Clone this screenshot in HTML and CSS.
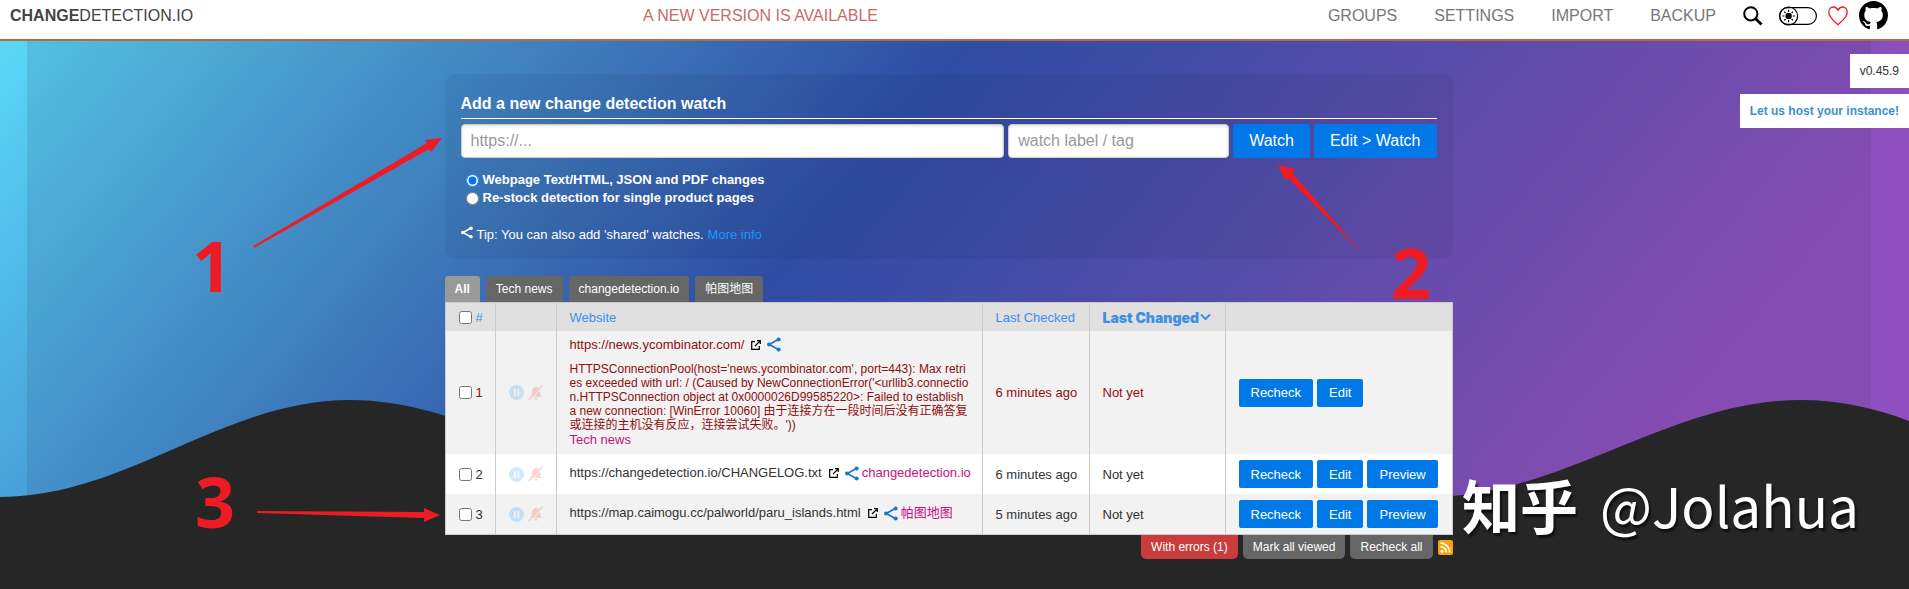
FILE: index.html
```html
<!DOCTYPE html>
<html lang="en">
<head>
    <meta charset="UTF-8">
    <meta name="viewport" content="width=device-width, initial-scale=1.0">
    <title>Change Detection</title>
    <link rel="stylesheet" href="styles.css">
</head>
<body>
    <svg class="symbols" aria-hidden="true">
        <symbol id="icon-share" viewBox="0 0 24 24">
            <path d="M20 3 4 12l16 9" fill="none" stroke="currentColor" stroke-width="3"/>
            <circle cx="20" cy="3.5" r="3.5"/><circle cx="3.5" cy="12" r="3.5"/><circle cx="20" cy="20.5" r="3.5"/>
        </symbol>
        <symbol id="icon-external" viewBox="0 0 10 10">
            <path d="M4 1.7H.7v7.6h7.6V6M6 .7h3.3V4M9.2.8 4 6" fill="none" stroke="currentColor" stroke-width="1.2"/>
        </symbol>
        <symbol id="icon-pause" viewBox="0 0 15 15">
            <circle cx="7.5" cy="7.5" r="7.5"/>
            <path d="M5.7 4v7M9.3 4v7" stroke="#fff" stroke-width="1.6"/>
        </symbol>
        <symbol id="icon-bell-off" viewBox="0 0 16 16">
            <path d="M2 12c2-1.500 2-3.200 2-5.500 0-2.500 1.500-4 3.200-4.300a1 1 0 0 1 1.900 0C11 2.600 12 4.200 12 6.500c0 2.300.2 4 2 5.500zM6.300 13h3.600a1.800 1.800 0 0 1-3.600 0z"/>
            <path d="M1.800 15.800 15.300 1.200" stroke="#fff" stroke-width="1"/>
            <path d="M.8 15 14.500.5" stroke="currentColor" stroke-width="1.600"/>
        </symbol>
    </svg>

    <header class="header">
        <a class="brand" href="#"><strong>CHANGE</strong>DETECTION.IO</a>
        <a class="new-version" href="#">A NEW VERSION IS AVAILABLE</a>
        <nav class="menu">
            <a href="#">GROUPS</a>
            <a href="#">SETTINGS</a>
            <a href="#">IMPORT</a>
            <a href="#">BACKUP</a>
            <div class="menu-icons">
                <button class="icon-button search" aria-label="Search">
                    <svg width="20" height="20" viewBox="0 0 20 20"><circle cx="7.800" cy="7.800" r="6.600" fill="none" stroke="#000" stroke-width="2"/><path d="m12.700 12.700 5.800 5.800" stroke="#000" stroke-width="2.800"/></svg>
                </button>
                <button class="icon-button toggle" aria-label="Toggle dark mode">
                    <svg width="38" height="20" viewBox="0 0 38 20">
                        <g fill="none" stroke="#000" stroke-width="1.200"><rect x=".6" y="1.600" width="36.800" height="16.800" rx="8.400"/><circle cx="9.600" cy="10" r="9"/>
                        <path d="M9.600 3.800v2M9.600 14.200v2M3.400 10h2M13.800 10h2M5.200 5.600l1.400 1.400M12.600 13l1.400 1.400M14 5.600 12.600 7M6.600 13l-1.400 1.400"/></g>
                        <circle cx="9.600" cy="10" r="3.200"/>
                    </svg>
                </button>
                <a href="#" aria-label="Support"><svg width="20" height="20" viewBox="0 0 20 20"><path d="M10 18.800C6.500 15.500.8 11.500.8 6.300.8 3.300 2.800 1 5.400 1 7.400 1 9 2.200 10 4.200 11 2.200 12.600 1 14.600 1c2.600 0 4.600 2.300 4.600 5.300 0 5.200-5.700 9.200-9.200 12.500z" fill="none" stroke="#ed1c24" stroke-width="1.300"/></svg></a>
                <a href="#" aria-label="GitHub"><svg width="29" height="29" viewBox="0 0 16 16"><path d="M8 0C3.580 0 0 3.580 0 8c0 3.540 2.290 6.530 5.470 7.590.4.070.55-.17.55-.38 0-.19-.01-.82-.01-1.490-2.010.37-2.530-.49-2.690-.94-.09-.23-.48-.94-.82-1.130-.28-.15-.68-.52-.01-.53.63-.01 1.080.58 1.230.82.72 1.210 1.870.87 2.330.66.07-.52.28-.87.51-1.070-1.780-.2-3.640-.89-3.640-3.950 0-.87.31-1.590.82-2.150-.08-.2-.36-1.020.08-2.120 0 0 .67-.21 2.200.82.64-.18 1.320-.27 2-.27s1.360.09 2 .27c1.530-1.040 2.200-.82 2.200-.82.44 1.100.16 1.920.08 2.120.51.56.82 1.270.82 2.150 0 3.070-1.870 3.750-3.650 3.950.29.25.54.73.54 1.480 0 1.070-.01 1.930-.01 2.200 0 .21.15.46.55.38A8.010 8.010 0 0 0 16 8c0-4.420-3.580-8-8-8z"/></svg></a>
            </div>
        </nav>
    </header>

    <div class="backdrop">
        <div class="backdrop-shade"></div>
        <svg class="hill" viewBox="0 0 1909 189" preserveAspectRatio="none"><path d="M0 97C127 97 223 0 350 0c130 0 230 97 365 97h715C1562 97 1670 0 1800 0c40 0 75 8 109 21v168H0z"/></svg>
    </div>

    <aside class="notices">
        <span class="notice">v0.45.9</span>
        <a class="notice hosting" href="#">Let us host your instance!</a>
    </aside>

    <main class="content">
        <form class="new-watch">
            <h1>Add a new change detection watch</h1>
            <div class="fields">
                <input class="url" type="text" placeholder="https://..." aria-label="URL">
                <input class="tag-field" type="text" placeholder="watch label / tag" aria-label="Watch label or tag">
                <button type="button">Watch</button>
                <button type="button">Edit &gt; Watch</button>
            </div>
            <div class="processors">
                <label><input type="radio" name="processor" checked> Webpage Text/HTML, JSON and PDF changes</label>
                <label><input type="radio" name="processor"> Re-stock detection for single product pages</label>
            </div>
            <p class="tip"><svg class="tip-icon"><use href="#icon-share"/></svg> Tip: You can also add 'shared' watches. <a href="#">More info</a></p>
        </form>

        <nav class="tabs">
            <a class="active" href="#">All</a>
            <a href="#">Tech news</a>
            <a href="#">changedetection.io</a>
            <a href="#">帕图地图</a>
        </nav>

        <table class="watches">
            <colgroup>
                <col class="col-number"><col class="col-state"><col><col class="col-checked"><col class="col-changed"><col class="col-actions">
            </colgroup>
            <thead>
                <tr>
                    <th><label class="pick"><input type="checkbox"> #</label></th>
                    <th></th>
                    <th><a href="#">Website</a></th>
                    <th><a href="#">Last Checked</a></th>
                    <th><a class="sorted" href="#">Last Changed<svg width="11" height="8" viewBox="0 0 11 8"><path d="m1 1.500 4.500 4.500L10 1.500" fill="none" stroke="currentColor" stroke-width="2"/></svg></a></th>
                    <th></th>
                </tr>
            </thead>
            <tbody>
                <tr class="error">
                    <td><label class="pick"><input type="checkbox"> 1</label></td>
                    <td><div class="state"><svg class="pause"><use href="#icon-pause"/></svg><svg class="bell"><use href="#icon-bell-off"/></svg></div></td>
                    <td>
                        <div class="site">https://news.ycombinator.com/ <a class="external" href="#" aria-label="Open"><svg><use href="#icon-external"/></svg></a><a class="share" href="#" aria-label="Share"><svg><use href="#icon-share"/></svg></a></div>
                        <div class="fetch-error">HTTPSConnectionPool(host='news.ycombinator.com', port=443): Max retries exceeded with url: / (Caused by NewConnectionError('&lt;urllib3.connection.HTTPSConnection object at 0x0000026D99585220&gt;: Failed to establish a new connection: [WinError 10060] 由于连接方在一段时间后没有正确答复或连接的主机没有反应，连接尝试失败。'))</div>
                        <span class="tag">Tech news</span>
                    </td>
                    <td>6 minutes ago</td>
                    <td>Not yet</td>
                    <td><div class="actions"><button>Recheck</button><button>Edit</button></div></td>
                </tr>
                <tr>
                    <td><label class="pick"><input type="checkbox"> 2</label></td>
                    <td><div class="state"><svg class="pause"><use href="#icon-pause"/></svg><svg class="bell"><use href="#icon-bell-off"/></svg></div></td>
                    <td><div class="site">https://changedetection.io/CHANGELOG.txt <a class="external" href="#" aria-label="Open"><svg><use href="#icon-external"/></svg></a><a class="share" href="#" aria-label="Share"><svg><use href="#icon-share"/></svg></a><span class="tag">changedetection.io</span></div></td>
                    <td>6 minutes ago</td>
                    <td>Not yet</td>
                    <td><div class="actions"><button>Recheck</button><button>Edit</button><button>Preview</button></div></td>
                </tr>
                <tr>
                    <td><label class="pick"><input type="checkbox"> 3</label></td>
                    <td><div class="state"><svg class="pause"><use href="#icon-pause"/></svg><svg class="bell"><use href="#icon-bell-off"/></svg></div></td>
                    <td><div class="site">https://map.caimogu.cc/palworld/paru_islands.html <a class="external" href="#" aria-label="Open"><svg><use href="#icon-external"/></svg></a><a class="share" href="#" aria-label="Share"><svg><use href="#icon-share"/></svg></a><span class="tag">帕图地图</span></div></td>
                    <td>5 minutes ago</td>
                    <td>Not yet</td>
                    <td><div class="actions"><button>Recheck</button><button>Edit</button><button>Preview</button></div></td>
                </tr>
            </tbody>
        </table>

        <div class="list-actions">
            <a class="with-errors" href="#">With errors (1)</a>
            <a href="#">Mark all viewed</a>
            <a href="#">Recheck all</a>
            <a class="rss" href="#" aria-label="RSS feed"><svg width="15" height="15" viewBox="0 0 15 15"><rect width="15" height="15" rx="2" fill="#f5a30f"/><circle cx="4" cy="11.200" r="1.500" fill="#fff"/><path d="M2.600 6.600a5.800 5.800 0 0 1 5.800 5.800M2.600 3.200a9.200 9.200 0 0 1 9.200 9.200" fill="none" stroke="#fff" stroke-width="1.700"/></svg></a>
        </div>
    </main>

    <!-- numbered steps drawn over the page -->
    <div class="annotations">
        <svg class="arrows" viewBox="0 0 1909 589">
            <path d="M253 246 427 143l-2-3 17-2-11 14-2-3L254 248z"/>
            <path d="m1363 254-75-76-3 2-7-15 17 4-2.500 4z"/>
            <path d="m257 511 167 1v-4l16 7-16 7v-4l-167-5z"/>
        </svg>
        <span class="step step-1">1</span>
        <span class="step step-2">2</span>
        <span class="step step-3">3</span>
        <div class="watermark"><b>知乎</b><span>@Jolahua</span></div>
    </div>
</body>
</html>
```
FILE: styles.css
```css
* {
    box-sizing: border-box;
}

body {
    margin: 0;
    min-height: 100vh;
    position: relative;
    overflow-x: hidden;
    background: #262626;
    color: #333;
    font-family: "Liberation Sans", "Noto Sans CJK SC", Arial, sans-serif;
    font-size: 13px;
}

a {
    color: #1b98f8;
    text-decoration: none;
}

button {
    border: none;
    border-radius: 2px;
    background: #0078e7;
    color: #fff;
    font-family: inherit;
    cursor: pointer;
}

input {
    font-family: inherit;
}

svg {
    fill: currentColor;
}

.symbols {
    position: absolute;
    width: 0;
    height: 0;
}

/* header */
.header {
    display: flex;
    align-items: center;
    justify-content: space-between;
    height: 41px;
    padding: 0 21px 8px 10px;
    border-bottom: 2px solid #b8683f;
    background: #fff;
    font-size: 16px;
}

.brand {
    color: #444;
}

.new-version {
    color: #c96a6a;
}

.menu {
    display: flex;
    align-items: center;
    gap: 37px;
}

.menu > a {
    color: #777;
}

.menu-icons {
    display: flex;
    align-items: center;
    gap: 11px;
    margin-left: -10px;
    color: #000;
}

.menu-icons a {
    display: flex;
    color: #000;
}

.icon-button {
    display: flex;
    padding: 0;
    background: none;
    color: #000;
}

.toggle {
    margin-left: 5px;
}

/* background */
.backdrop {
    position: absolute;
    top: 41px;
    left: 0;
    z-index: -1;
    width: 100%;
    height: 548px;
    overflow: hidden;
    background: linear-gradient(130deg, #5ad8f7, #2f50af 41%, #9150bf 84%);
}

.backdrop-shade {
    height: 100%;
    margin: 0 38px 0 27px;
    background: rgba(50, 50, 80, 0.12);
}

.hill {
    position: absolute;
    bottom: 0;
    left: 0;
    width: 100%;
    height: 189px;
    fill: #262626;
}

/* boxes on the right edge */
.notices {
    position: absolute;
    top: 54px;
    right: 0;
    display: flex;
    flex-direction: column;
    align-items: flex-end;
    gap: 6px;
}

.notice {
    padding: 10px;
    background: #fff;
    font-size: 12px;
    line-height: 14px;
}

.hosting {
    color: #3d8fd1;
    font-weight: bold;
}

/* main column */
.content {
    width: 1008px;
    max-width: 100%;
    margin: 0 auto;
    padding-top: 33px;
    position: relative;
    right: 6px;
}

.new-watch {
    padding: 20px 16px 15px;
    border-radius: 10px;
    background: rgba(0, 0, 0, 0.05);
    color: #fff;
}

.new-watch h1 {
    margin: 0 0 5px;
    padding-bottom: 5px;
    border-bottom: 1px solid #fff;
    font-size: 16px;
    line-height: 19px;
}

.fields {
    display: flex;
    gap: 4px;
}

.fields input {
    height: 34px;
    padding: 0 9px;
    border: 1px solid #ccc;
    border-radius: 4px;
    background: #fff;
    box-shadow: inset 0 1px 3px #ddd;
    font-size: 16px;
}

.fields input::placeholder {
    color: #999;
}

.fields .url {
    flex: 1;
    min-width: 0;
}

.fields .tag-field {
    width: 221px;
}

.fields button {
    padding: 0 16px;
    font-size: 16px;
}

.processors {
    display: flex;
    flex-direction: column;
    padding: 13px 0 0 5px;
}

.processors label {
    display: flex;
    align-items: center;
    gap: 4px;
    font-weight: bold;
    line-height: 18px;
}

.processors input {
    width: 13px;
    height: 13px;
    margin: 0;
}

.tip {
    display: flex;
    gap: 4px;
    margin: 19px 0 0;
    line-height: 18px;
}

.tip-icon {
    width: 12px;
    height: 13px;
}

/* tag tabs */
.tabs {
    display: flex;
    align-items: flex-end;
    gap: 6px;
    padding-top: 17px;
}

.tabs a {
    padding: 5px 10px;
    border-radius: 3px 3px 0 0;
    background: #666;
    color: #fff;
    font-size: 12px;
    line-height: 16px;
}

.tabs .active {
    background: #999;
    font-weight: bold;
}

/* watch list */
.watches {
    width: 100%;
    table-layout: fixed;
    border: 1px solid #cbcbcb;
    border-spacing: 0;
    background: #fff;
    white-space: nowrap;
}

.col-number {
    width: 49px;
}

.col-state {
    width: 61px;
}

.col-checked {
    width: 107px;
}

.col-changed {
    width: 136px;
}

.col-actions {
    width: 227px;
}

.watches th {
    height: 28px;
    padding: 0 12px 0 13px;
    background: #e0e0e0;
    font-weight: normal;
    text-align: left;
}

.watches th a,
.watches th label {
    color: #3d8fe6;
}

.watches td {
    padding: 6px 12px 6px 13px;
}

.watches th + th,
.watches td + td {
    border-left: 1px solid #cbcbcb;
}

.watches tbody tr:nth-child(odd) {
    background: #f2f2f2;
}

.watches .error {
    color: #8f0f0f;
}

.watches .sorted {
    display: flex;
    align-items: center;
    gap: 1px;
    font-family: Inter, "Liberation Sans", sans-serif;
    font-size: 14px;
    font-weight: 900;
}

.pick {
    display: flex;
    align-items: center;
    gap: 4px;
}

.pick input {
    width: 13px;
    height: 13px;
    margin: 0;
}

.state {
    display: flex;
    align-items: center;
    gap: 4px;
    opacity: 0.2;
}

.pause {
    width: 15px;
    height: 15px;
    color: #1b98f8;
}

.bell {
    width: 16px;
    height: 16px;
    color: #e8402a;
}

.site {
    display: flex;
    align-items: center;
    padding-bottom: 2px;
    line-height: 14px;
}

.external {
    display: flex;
    margin: 0 6px 0 7px;
    color: #000;
}

.external svg {
    width: 10px;
    height: 10px;
}

.share {
    display: flex;
    margin-right: 3px;
    color: #1b78d0;
}

.share svg {
    width: 14px;
    height: 15px;
}

.fetch-error {
    margin: 8px 0 0;
    font-size: 12px;
    line-height: 14px;
    white-space: normal;
    word-break: break-all;
}

.tag {
    color: #c4127f;
    line-height: 16px;
}

.actions {
    display: flex;
    gap: 4px;
}

.actions button {
    height: 28px;
    padding: 0 12px;
    font-size: 13px;
}

/* buttons under the list */
.list-actions {
    display: flex;
    align-items: flex-start;
    justify-content: flex-end;
    gap: 5px;
}

.list-actions a {
    padding: 5px 10px;
    border-radius: 0 0 5px 5px;
    background: #666;
    color: #fff;
    font-size: 12px;
    line-height: 14px;
}

.list-actions .with-errors {
    background: #c83c3c;
}

.list-actions .rss {
    display: flex;
    padding: 5px 0 0;
    background: none;
}

/* numbered steps */
.annotations {
    position: absolute;
    inset: 0;
    pointer-events: none;
}

.arrows {
    display: block;
    width: 100%;
    fill: #ed1c24;
}

.step {
    position: absolute;
    color: #ed1c24;
    font-family: "Open Sans", "Noto Sans", sans-serif;
    font-size: 70px;
    font-weight: bold;
    line-height: 72px;
}

.step-1 {
    top: 229px;
    left: 192px;
}

.step-2 {
    top: 236px;
    left: 1391px;
}

.step-3 {
    top: 465px;
    left: 195px;
}

.watermark {
    position: absolute;
    right: 50px;
    bottom: 50px;
    display: flex;
    gap: 22px;
    color: #fff;
    font-family: "Noto Sans CJK SC", sans-serif;
    font-size: 55px;
    line-height: 70px;
    text-shadow: 2px 3px 2px rgba(0, 0, 0, 0.6);
}

.watermark b {
    font-size: 58px;
}
```
